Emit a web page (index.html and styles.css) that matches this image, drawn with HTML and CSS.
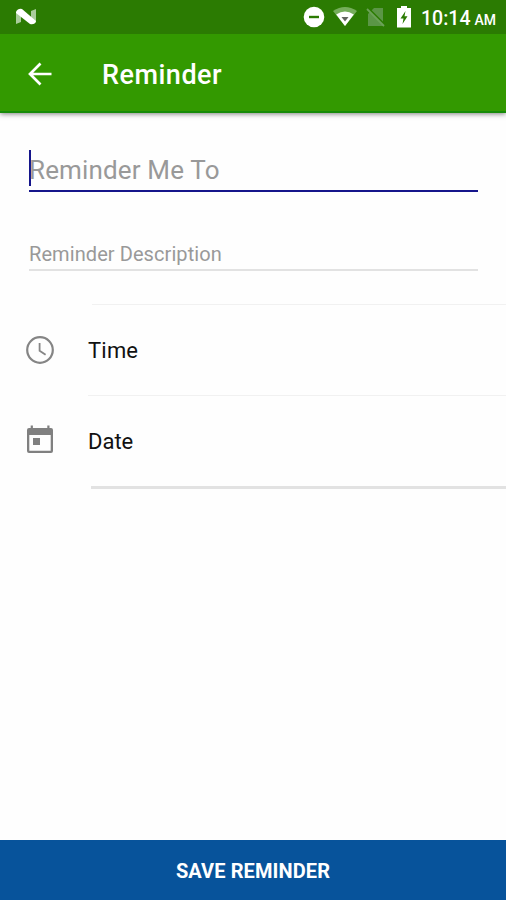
FILE: index.html
```html
<!DOCTYPE html>
<html lang="en">
<head>
<meta charset="utf-8">
<title>Reminder</title>
<link rel="stylesheet" href="styles.css">
</head>
<body>
<div class="screen">
  <header class="header">
    <div class="status">
      <svg class="status-logo" width="22" height="18" viewBox="0 0 22 18">
        <path d="M1 4 6 1v13l-5 2zM16 3l5-2v13l-5 2z" fill="#a9cc9b"/>
        <path d="M1 4Q3 0 7 1L21 13Q20 17 15 16L1 5z" fill="#fff"/>
      </svg>
      <div class="status-icons">
        <svg class="dnd" width="22" height="22" viewBox="0 0 22 22"><circle cx="11" cy="11" r="10.3" fill="#fff"/><path d="M6 11h10" stroke="#2b7b02" stroke-width="2.4"/></svg>
        <svg class="wifi" width="24" height="20" viewBox="0 0 24 20"><path d="M0 4Q12-4 24 4L12 19z" fill="#75ad5b"/><path d="M3.2 7.6Q12 1.5 20.8 7.6L12 19z" fill="#fff"/><path d="M8.5 10h7L12 14.5z" fill="#62655f"/></svg>
        <svg class="sim" width="20" height="20" viewBox="0 0 20 20"><path d="M8 1h9v18H2V7z" fill="#5b9646"/><path d="M2 1l17 17" stroke="#2b7b02" stroke-width="2"/><path d="M1 2l17 17" stroke="#6ca258" stroke-width="1.8"/></svg>
        <svg class="battery" width="14" height="22" viewBox="0 0 14 22"><path d="M4 0h6v2h4v19.5H0V2h4z" fill="#fff"/><path d="M8.5 5 3.5 12.5h3L5.5 18l5-7.7H7.5z" fill="#2b7b02"/></svg>
      </div>
      <span class="clock">10:14</span><span class="meridiem">AM</span>
    </div>
    <div class="toolbar">
      <svg class="back" width="24" height="24" viewBox="0 0 24 24" fill="none" stroke="#fff" stroke-width="2.7"><path d="M23.5 12H2M12.5 1.5 2 12l10.5 10.5"/></svg>
      <h1 class="title">Reminder</h1>
    </div>
  </header>
  <main class="content">
    <div class="field field-active"><span class="caret"></span><span class="hint">Reminder Me To</span></div>
    <div class="field field-desc"><span class="hint">Reminder Description</span></div>
    <div class="row row-time">
      <svg class="row-icon" width="30" height="30" viewBox="0 0 30 30" fill="none" stroke="#858585"><circle cx="15" cy="15" r="12.8" stroke-width="2.2"/><path d="M14.6 8v7.8l6 4" stroke-width="1.8"/></svg>
      <span class="label">Time</span>
    </div>
    <div class="row row-date">
      <svg class="row-icon" width="30" height="30" viewBox="0 0 30 30" fill="#808080"><path fill-rule="evenodd" d="M5.7.5h2.2V3h14.4V.5h2.2V3H26q2 0 2 2v21q0 2-2 2H4q-2 0-2-2V5q0-2 2-2h1.7zM4.3 10v15.8h21.4V10z"/><path d="M8 13h7v7H8z"/></svg>
      <span class="label">Date</span>
    </div>
  </main>
  <button class="save">SAVE REMINDER</button>
</div>
</body>
</html>
```
FILE: styles.css
```css
* { box-sizing: border-box; }
body { margin: 0; font-family: Roboto, sans-serif; background: #fefefe; }
.screen { display: flex; flex-direction: column; width: 506px; height: 900px; overflow: hidden; }
.header { height: 113px; background: #339900; border-bottom: 2px solid #168b08; box-shadow: 0 1px 5px rgba(0,0,0,.5); }
.status { display: flex; align-items: center; height: 34px; padding: 0 10px 0 15px; background: #2b7b02; color: #fff; }
.status-logo { margin-right: auto; }
.status-icons { display: flex; align-items: center; margin-right: 10px; }
.wifi { margin-left: 8px; }
.sim { margin-left: 9px; }
.battery { margin-left: 11px; }
.clock { font-size: 19.5px; font-weight: 500; line-height: 34px; padding-top: 3px; }
.meridiem { font-size: 14px; font-weight: 500; line-height: 34px; padding: 6px 0 0 4px; }
.toolbar { display: flex; align-items: center; height: 79px; padding-left: 28px; }
.title { margin: 3px 0 0 50px; font-size: 27px; font-weight: 500; line-height: 32px; letter-spacing: .5px; color: #fff; }
.content { display: flex; flex-direction: column; flex: 1; }
.field { display: flex; margin: 0 28px 0 29px; color: #999; white-space: nowrap; }
.field-active { height: 42px; margin-top: 37px; border-bottom: 2px solid #15158b; font-size: 26px; line-height: 40px; letter-spacing: .15px; }
.caret { width: 2px; height: 36px; margin-right: -2px; background: #15158b; }
.field-desc { margin-top: 46px; height: 33px; border-bottom: 2px solid #e2e2e2; font-size: 20px; line-height: 32px; letter-spacing: .08px; }
.row { display: flex; align-items: center; padding-left: 25px; }
.label { margin-left: 33px; font-size: 22px; line-height: 30px; color: #111; }
.row-time { height: 91px; margin-top: 33px; background: linear-gradient(#f1f1f1, #f1f1f1) 92px 0 / 414px 1px no-repeat; }
.row-time .label { margin-top: 2px; letter-spacing: .2px; }
.row-date { height: 94px; background: linear-gradient(#f1f1f1, #f1f1f1) 88px 0 / 418px 1px no-repeat, linear-gradient(#e2e2e2, #e2e2e2) 91px 91px / 415px 3px no-repeat; }
.row-date .row-icon { margin-bottom: 4px; }
.save { height: 60px; padding: 2px 0 0; border: 0; background: #07539b; color: #fff; font: 700 20px/30px Roboto, sans-serif; letter-spacing: .1px; }
```
